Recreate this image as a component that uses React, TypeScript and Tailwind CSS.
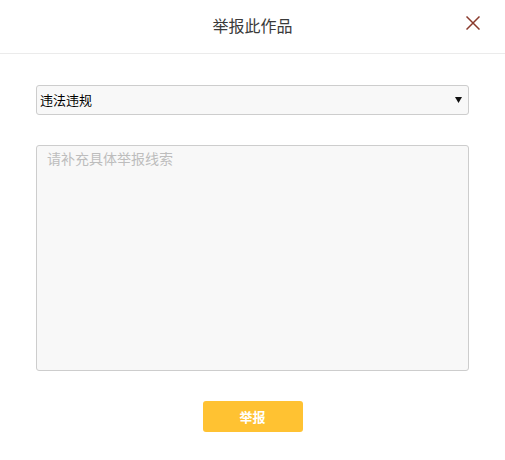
import { useState } from "react";

const reasons = ["违法违规", "色情低俗", "侵犯版权", "广告营销", "其他"];

export default function App() {
  const [reason, setReason] = useState(reasons[0]);

  return (
    <div
      className="w-[505px] h-[460px] bg-white text-[#333]"
      style={{ fontFamily: '"Microsoft YaHei", "Noto Sans CJK SC", sans-serif' }}
    >
      {/* Header */}
      <div className="relative h-[54px] border-b border-[#ebebeb] flex items-center justify-center">
        <h2 className="text-[16px] text-[#3a3a3a] -mt-[3px]">举报此作品</h2>
        <button className="absolute right-[25px] top-[16px] w-[14px] h-[14px] flex items-center justify-center">
          <svg width="14" height="14" viewBox="0 0 14 14" fill="none">
            <path d="M0.5 0.5 L13.5 13.5 M13.5 0.5 L0.5 13.5" stroke="#8a3a2c" strokeWidth="1.5" />
          </svg>
        </button>
      </div>

      {/* Form */}
      <div className="px-9 pt-[31px] flex flex-col">
        <div className="relative h-[30px]">
          <select
            value={reason}
            onChange={(e) => setReason(e.target.value)}
            className="w-full h-full appearance-none bg-[#f8f8f8] border border-[#cdcdcd] rounded-[3px] pl-[3px] text-[13px] text-black outline-none"
          >
            {reasons.map((r) => (
              <option key={r}>{r}</option>
            ))}
          </select>
          <svg
            className="absolute right-[7px] top-[12px] pointer-events-none"
            width="7"
            height="6"
            viewBox="0 0 7 6"
          >
            <path d="M0 0 H7 L3.5 6 Z" fill="#111" />
          </svg>
        </div>

        <textarea
          placeholder="请补充具体举报线索"
          className="mt-[30px] h-[226px] resize-none bg-[#f8f8f8] border border-[#cdcdcd] rounded-[3px] px-[10px] pt-[2px] text-[14px] placeholder:text-[#bdbdbd] outline-none"
        />

        <div className="mt-[30px] flex justify-center">
          <button className="w-[100px] h-[31px] rounded-[3px] bg-[#ffc232] text-white text-[13px] font-semibold">
            举报
          </button>
        </div>
      </div>
    </div>
  );
}
